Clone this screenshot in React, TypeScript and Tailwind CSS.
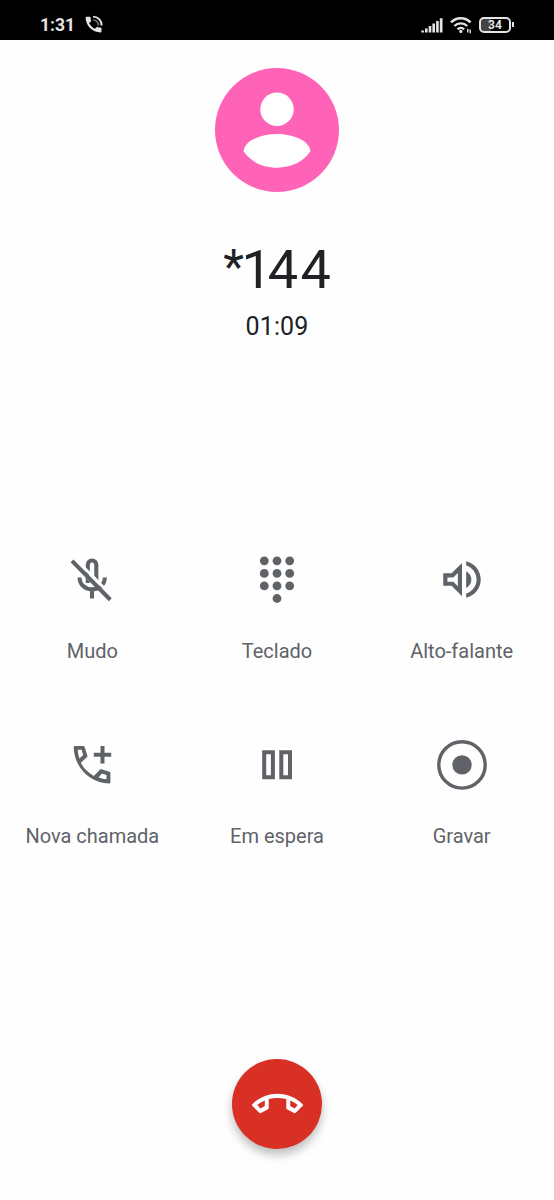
import { ReactNode } from "react"

interface Action {
    label: string
    icon: ReactNode
}

function MicOffIcon() {
    return (
        <svg viewBox="0 0 50 50" className="size-[50px]" fill="none">
            <g stroke="#5f6368" strokeWidth="4.1">
                <path d="M20.8 28V9.8a4.25 4.25 0 0 1 8.5 0V26" />
                <path d="M12.6 22.4c0 7.2 5.6 12 12.4 12s12.8-4.8 12.8-12M25 34v9.4" />
            </g>
            <path d="M20 24 26.5 30.5 33 30.5 29 23 23 17.5Z" fill="#fefefe" />
            <path d="M7.5 3 45.9 42" stroke="#fefefe" strokeWidth="3" />
            <path d="M5 5.9 43.3 44.8" stroke="#5f6368" strokeWidth="4.1" />
        </svg>
    )
}

function DialpadIcon() {
    const dots = [12.3, 25, 37.7].flatMap((x) =>
        [5.8, 18.4, 30.9].map((y) => [x, y])
    )

    return (
        <svg viewBox="0 0 50 50" className="size-[50px]" fill="#5f6368">
            {[...dots, [25, 43.5]].map(([x, y]) => (
                <circle key={`${x}-${y}`} cx={x} cy={y} r="4.4" />
            ))}
        </svg>
    )
}

function SpeakerIcon() {
    return (
        <svg viewBox="0 0.2 24 24" className="size-[50px]" fill="#5f6368">
            <path d="M3 9v6h4l5 5V4L7 9H3zm7-.17v6.34L7.83 13H5v-2h2.83L10 8.83zM16.5 12c0-1.77-1.02-3.29-2.5-4.03v8.05c1.48-.73 2.5-2.25 2.5-4.02zM14 3.23v2.06c2.89.86 5 3.54 5 6.71s-2.11 5.85-5 6.71v2.06c4.01-.91 7-4.49 7-8.77s-2.99-7.86-7-8.77z" />
        </svg>
    )
}

function AddCallIcon() {
    return (
        <svg viewBox="0 0 50 50" className="size-[50px]" fill="#5f6368">
            <path
                fillRule="evenodd"
                d="M8 6H16.2Q17.3 6 17.6 7L20.6 16.4 13.8 22.8Q18 31 26.8 35.9L33.6 29 42.4 31.7Q43.4 32 43.4 33V42.3Q43.4 43.6 42 43.6C22.5 42.8 7.4 27.5 6.7 7.4Q6.7 6 8 6ZM10.7 9.8Q11 14.3 12.4 18.4L16.2 15 14.6 9.8ZM31.6 37.4Q35.6 39 39.5 39.3V35L34.8 33.6Z"
            />
            <path d="M33.5 6h4v6.7h6.7v4h-6.7v6.7h-4v-6.7h-6.7v-4h6.7z" />
        </svg>
    )
}

function HoldIcon() {
    return (
        <svg
            viewBox="0 0 50 50"
            className="size-[50px]"
            fill="none"
            stroke="#5f6368"
            strokeWidth="4"
        >
            <path d="M12.2 12.3h8.7v25h-8.7zM29.3 12.3H38v25h-8.7z" />
        </svg>
    )
}

function RecordIcon() {
    return (
        <svg viewBox="0 0 50 50" className="size-[50px]">
            <circle
                cx="25"
                cy="24.9"
                r="23.2"
                fill="none"
                stroke="#5f6368"
                strokeWidth="3.4"
            />
            <circle cx="25" cy="24.9" r="9.7" fill="#5f6368" />
        </svg>
    )
}

function StatusBar() {
    return (
        <header className="flex h-10 items-center justify-between bg-black pt-[9px] pr-10 pl-10 text-[#e4e4e4]">
            <div className="flex items-center gap-2">
                <span className="w-[35px] text-[17.5px] leading-[22px] font-bold whitespace-nowrap">
                    1:31
                </span>
                <svg
                    viewBox="0 0 24 24"
                    className="mb-px size-[21px]"
                    fill="currentColor"
                >
                    <path d="M6.9 10.3c1.4 2.8 3.8 5.1 6.6 6.6l2-1.9c.3-.3.7-.4 1-.2 1.1.4 2.3.6 3.6.6.6 0 1 .4 1 1V20c0 .6-.4 1-1 1C10.6 21 3 13.4 3 4c0-.6.4-1 1-1h3.7c.6 0 1 .4 1 1 0 1.3.2 2.5.6 3.6.1.3 0 .7-.2 1z" />
                    <g fill="none" stroke="currentColor" strokeWidth="2.2">
                        <path d="M11.5 3c5.5 0 9.8 4.3 9.8 10" />
                        <path d="M11.8 7c3.3 0 5.8 2.5 5.8 6" opacity=".5" />
                    </g>
                </svg>
            </div>

            <div className="flex items-center">
                {/* Signal */}
                <svg
                    viewBox="0 0 22 16"
                    className="h-4 w-[22px]"
                    fill="currentColor"
                >
                    <path d="M.3 13.4h2.6v2.1H.3zM4 11.4h2.6v4.1H4zM7.7 9h2.6v6.5H7.7zM11.4 6.5H14v9h-2.6zM15.1 4h2.6v11.5h-2.6zM18.8 1.2h2.7v14.3h-2.7z" />
                </svg>
                {/* Wi-Fi */}
                <svg
                    viewBox="0 0 24 18"
                    className="ml-[7px] h-[18px] w-6"
                    fill="none"
                    stroke="currentColor"
                    strokeWidth="2.4"
                >
                    <path d="M1 6.4c5.6-5.5 14-5.5 19.6 0M4.3 10c3.7-3.5 9.3-3.5 13 0" />
                    <path d="M7.5 13.4c1.9-1.8 4.7-1.8 6.6 0" />
                    <circle
                        cx="10.8"
                        cy="15.4"
                        r="1.6"
                        fill="currentColor"
                        stroke="none"
                    />
                    <path d="M17.8 12.8v3.6M20.2 13.6v3.6" strokeWidth="1.4" />
                </svg>
                {/* Battery */}
                <div className="ml-[5px] flex h-4 w-8 items-center justify-center rounded-[5px] border-2 border-current bg-[linear-gradient(90deg,#444_34%,#000_34%)] text-[12px] leading-none font-bold">
                    34
                </div>
                <div className="ml-px h-[5px] w-0.5 bg-current" />
            </div>
        </header>
    )
}

const actions: Action[] = [
    { label: "Mudo", icon: <MicOffIcon /> },
    { label: "Teclado", icon: <DialpadIcon /> },
    { label: "Alto-falante", icon: <SpeakerIcon /> },
    { label: "Nova chamada", icon: <AddCallIcon /> },
    { label: "Em espera", icon: <HoldIcon /> },
    { label: "Gravar", icon: <RecordIcon /> },
]

export default function App() {
    return (
        <div className="flex h-[1200px] w-[554px] flex-col bg-[#fefefe] font-[Roboto,sans-serif] text-[#202124]">
            <StatusBar />

            {/* Caller */}
            <section className="flex flex-col items-center pt-7">
                <svg viewBox="0 0 124 124" className="size-[124px]">
                    <circle cx="62" cy="62" r="62" fill="#ff63b8" />
                    <circle cx="62" cy="41.3" r="16.7" fill="#fff" />
                    <path
                        d="M28.7 83.6C28.7 73 46 66 62 66s33.3 7 33.3 17.6C88 94 76 99.7 62 99.7S36 94 28.7 83.6z"
                        fill="#fff"
                    />
                </svg>
                <h1 className="mt-[46px] flex h-16 text-[54px] leading-[64px]">
                    <span className="text-[48px] leading-[57px] tracking-[-2.5px]">
                        *
                    </span>
                    <span className="tracking-[-4.1px]">1</span>
                    <span className="tracking-[2.4px]">4</span>
                    <span>4</span>
                </h1>
                <p className="mt-2.5 text-[25px] leading-[30px] tracking-[0.1px]">
                    01:09
                </p>
            </section>

            {/* Call controls */}
            <section className="mt-[213px] grid grid-cols-3">
                {actions.map(({ label, icon }) => (
                    <button
                        key={label}
                        className="flex h-[185px] flex-col items-center text-[20px] leading-6 whitespace-nowrap text-[#5f6368]"
                    >
                        {icon}
                        <span className="mt-[34px]">{label}</span>
                    </button>
                ))}
            </section>

            {/* Hang up */}
            <button className="mx-auto mt-[134px] flex size-[90px] items-center justify-center rounded-full bg-[#d93025] shadow-[0_6px_10px_rgba(0,0,0,0.25)]">
                <svg
                    viewBox="0 0 60 60"
                    className="size-[60px]"
                    fill="#fff"
                    fillRule="evenodd"
                >
                    <path d="M5.3 30.2C19 16.2 42 16.2 55.7 30.2Q56.5 31 55.7 31.8L48.8 38.8Q48 39.6 47 39L40 35.2Q39.3 34.8 39.3 34V25Q30.5 22.8 21.7 25V34Q21.7 34.8 21 35.2L14 39Q13 39.6 12.2 38.8L5.3 31.8Q4.5 31 5.3 30.2ZM10.3 31 13.4 34.4 17.8 32V26.6Q13.5 28.3 10.3 31ZM50.7 31Q47.5 28.3 43.2 26.6V32L47.6 34.4Z" />
                </svg>
            </button>
        </div>
    )
}
